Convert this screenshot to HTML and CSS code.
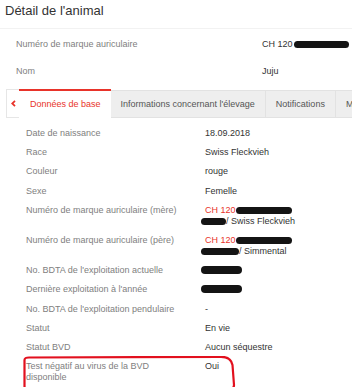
FILE: index.html
```html
<!DOCTYPE html>
<html lang="fr">
<head>
    <meta charset="UTF-8">
    <meta name="viewport" content="width=device-width, initial-scale=1.0">
    <title>Détail de l'animal</title>
    <link rel="stylesheet" href="styles.css">
</head>
<body>
    <div class="page">
        <h1 class="title">Détail de l'animal</h1>

        <div class="summary">
            <div class="summary-row">
                <span class="label">Numéro de marque auriculaire</span>
                <span class="value">CH 120<span class="redact redact-head"></span></span>
            </div>
            <div class="summary-row">
                <span class="label">Nom</span>
                <span class="value">Juju</span>
            </div>
        </div>

        <div class="tabs">
            <button type="button" class="tab-arrow" aria-label="Précédent">
                <svg width="5" height="7" viewBox="0 0 5 7"><polyline points="4,0.8 1.2,3.5 4,6.2" fill="none" stroke="#e8332a" stroke-width="1.8"/></svg>
            </button>
            <div class="tab active">Données de base</div>
            <div class="tab">Informations concernant l'élevage</div>
            <div class="tab">Notifications</div>
            <div class="tab">Mouvements</div>
        </div>

        <div class="details">
            <div class="row">
                <span class="label">Date de naissance</span>
                <span class="value">18.09.2018</span>
            </div>
            <div class="row">
                <span class="label">Race</span>
                <span class="value">Swiss Fleckvieh</span>
            </div>
            <div class="row">
                <span class="label">Couleur</span>
                <span class="value">rouge</span>
            </div>
            <div class="row">
                <span class="label">Sexe</span>
                <span class="value">Femelle</span>
            </div>
            <div class="row">
                <span class="label">Numéro de marque auriculaire (mère)</span>
                <span class="value">
                    <span class="link">CH 120</span><span class="redact redact-id"></span><br>
                    <span class="redact redact-name redact-first"></span>/ Swiss Fleckvieh
                </span>
            </div>
            <div class="row">
                <span class="label">Numéro de marque auriculaire (père)</span>
                <span class="value">
                    <span class="link">CH 120</span><span class="redact redact-id"></span><br>
                    <span class="redact redact-name-wide redact-first"></span>/ Simmental
                </span>
            </div>
            <div class="row">
                <span class="label">No. BDTA de l'exploitation actuelle</span>
                <span class="value"><span class="redact redact-farm redact-first"></span></span>
            </div>
            <div class="row">
                <span class="label">Dernière exploitation à l'année</span>
                <span class="value"><span class="redact redact-farm redact-first"></span></span>
            </div>
            <div class="row">
                <span class="label">No. BDTA de l'exploitation pendulaire</span>
                <span class="value">-</span>
            </div>
            <div class="row">
                <span class="label">Statut</span>
                <span class="value">En vie</span>
            </div>
            <div class="row">
                <span class="label">Statut BVD</span>
                <span class="value">Aucun séquestre</span>
            </div>
            <div class="row highlighted">
                <span class="label">Test négatif au virus de la BVD<br>disponible</span>
                <span class="value">Oui</span>
                <svg class="marker" width="216" height="36" viewBox="0 0 216 36">
                    <path d="M2.5,4 Q2.5,1.5 7,1.5 L199,0.8 Q209,0.8 210.5,9 L212,29 Q212,33.5 206,33.5 L7,34.2 Q2.5,34.2 2.5,30 Z" fill="none" stroke="#e2101e" stroke-width="2.2" stroke-linejoin="round"/>
                </svg>
            </div>
        </div>
    </div>
</body>
</html>
```

FILE: styles.css
```css
:root {
    --red: #e8332a;
    --label-color: #808080;
    --text-color: #333333;
    --line-color: #eeeeee;
}

* {
    box-sizing: border-box;
    margin: 0;
    padding: 0;
}

body {
    font-family: 'Liberation Sans', Arial, sans-serif;
    background-color: #ffffff;
    color: var(--text-color);
    overflow: hidden;
}

.page {
    width: 352px;
}

.title {
    height: 29px;
    padding: 2px 5px 0;
    font-size: 13px;
    font-weight: 400;
    line-height: 17px;
    color: #333333;
    border-bottom: 1px solid #f2f2f2;
}

.summary {
    padding: 2px 0 0 16px;
}

.summary-row {
    display: grid;
    grid-template-columns: 246px 1fr;
    height: 27px;
    line-height: 27px;
    font-size: 9px;
    white-space: nowrap;
}

.label {
    color: var(--label-color);
}

.value {
    color: var(--text-color);
}

.redact {
    display: inline-block;
    height: 7px;
    border-radius: 4px;
    background-color: #141414;
    vertical-align: -1px;
}

.redact-head {
    width: 55px;
    margin-left: 1px;
}

.redact-id {
    width: 56px;
}

.redact-name {
    width: 25px;
}

.redact-name-wide {
    width: 38px;
}

.redact-farm {
    width: 41px;
    height: 8px;
}

.redact-first {
    margin-left: -4px;
}

.link {
    color: var(--red);
}

/* tab bar */
.tabs {
    display: flex;
    align-items: flex-start;
    margin: 4px 0 0 6px;
    height: 29px;
    overflow: hidden;
    white-space: nowrap;
}

.tab-arrow {
    flex-shrink: 0;
    display: flex;
    align-items: center;
    justify-content: center;
    width: 13px;
    height: 29px;
    background-color: #ffffff;
    border: 1px solid #e6e6e6;
    border-right: none;
    padding-left: 1px;
    cursor: pointer;
}

.tab {
    flex-shrink: 0;
    height: 28px;
    margin-top: 1px;
    padding: 0 10px;
    font-size: 9px;
    line-height: 26px;
    color: #555555;
    background-color: #eeeeee;
    border: 1px solid #e2e2e2;
    border-left: none;
}

.tab.active {
    height: 29px;
    margin-top: 0;
    padding: 0 10px 0 11px;
    color: var(--red);
    background-color: #ffffff;
    border: none;
    border-top: 2px solid var(--red);
    line-height: 26px;
}

/* detail rows */
.details {
    padding: 6px 0 0 26px;
}

.row {
    position: relative;
    display: grid;
    grid-template-columns: 179px 1fr;
    padding: 4.1px 0;
    font-size: 9px;
    line-height: 11px;
    white-space: nowrap;
}

.marker {
    position: absolute;
    left: -4px;
    top: -1px;
}
```
